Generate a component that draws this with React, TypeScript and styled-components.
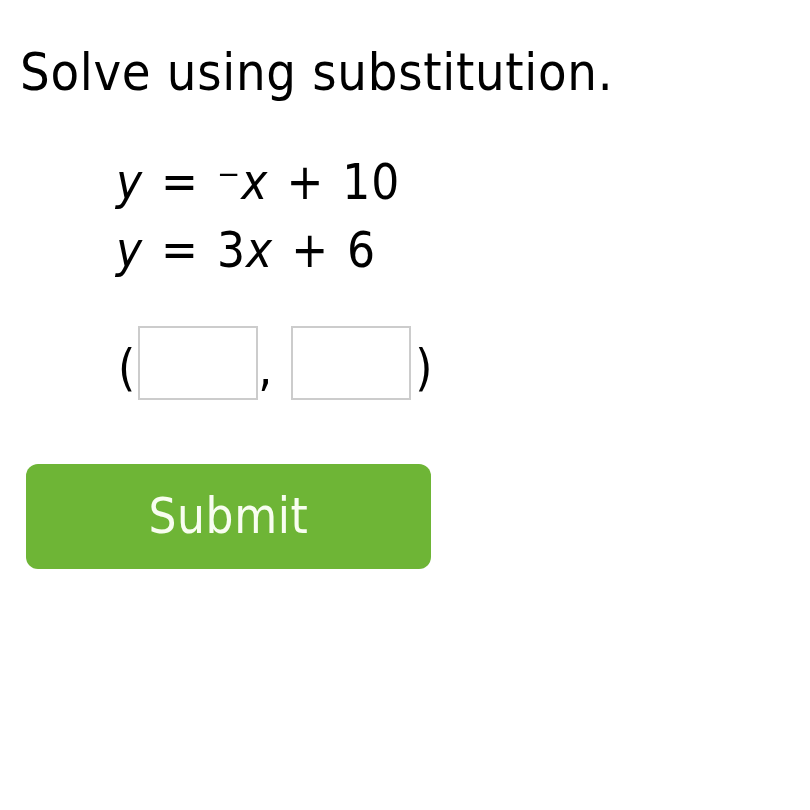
import React from "react";
import styled, { createGlobalStyle } from "styled-components";

const Global = createGlobalStyle`
  html, body { margin: 0; padding: 0; background: #ffffff; }
  body { font-family: "DejaVu Sans Condensed", "DejaVu Sans", sans-serif; font-stretch: condensed; color: #000; }
`;

const Page = styled.div`
  padding: 42px 0 0 20px;
  display: flex;
  flex-direction: column;
  align-items: flex-start;
`;

const Title = styled.h1`
  margin: 0;
  font-weight: normal;
  font-size: 52px;
  line-height: normal;
  letter-spacing: 0.7px;
`;

const Equations = styled.div`
  margin: 47px 0 0 96px;
  font-size: 49px;
  line-height: 68px;
  white-space: pre;
  letter-spacing: 1px;
  word-spacing: 3px;
`;

const Line = styled.div``;

const V = styled.i`
  font-style: italic;
`;

const AnswerRow = styled.div`
  margin: 41px 0 0 98px;
  display: flex;
  align-items: center;
  font-size: 49px;
  line-height: normal;
`;

const Paren = styled.span<{ $side: "l" | "r" }>`
  padding-top: 10px;
  margin: ${(p) => (p.$side === "l" ? "0 3px 0 0" : "0 0 0 4px")};
`;

const Comma = styled.span`
  padding-top: 10px;
  margin-right: 19px;
`;

const Box = styled.input`
  box-sizing: border-box;
  width: 120px;
  height: 74px;
  border: 2px solid #cccccc;
  background: #fff;
  margin: 0;
  padding: 0;
  outline: none;
  font-size: 40px;
  font-family: inherit;
`;

const SubmitButton = styled.button`
  margin: 64px 0 0 6px;
  width: 405px;
  height: 105px;
  border: none;
  border-radius: 12px;
  background: #6eb536;
  color: #f8fdf0;
  font-family: "DejaVu Sans Condensed", "DejaVu Sans", sans-serif;
  font-stretch: condensed;
  font-size: 49px;
  letter-spacing: 0.6px;
  cursor: pointer;
  padding: 0;
`;

export default function App() {
  return (
    <>
      <Global />
      <Page>
        <Title>Solve using substitution.</Title>
        <Equations>
          <Line>
            <V>y</V> = ⁻<V>x</V> + 10
          </Line>
          <Line>
            <V>y</V> = 3<V>x</V> + 6
          </Line>
        </Equations>
        <AnswerRow>
          <Paren $side="l">(</Paren>
          <Box aria-label="x" />
          <Comma>,</Comma>
          <Box aria-label="y" />
          <Paren $side="r">)</Paren>
        </AnswerRow>
        <SubmitButton>Submit</SubmitButton>
      </Page>
    </>
  );
}
